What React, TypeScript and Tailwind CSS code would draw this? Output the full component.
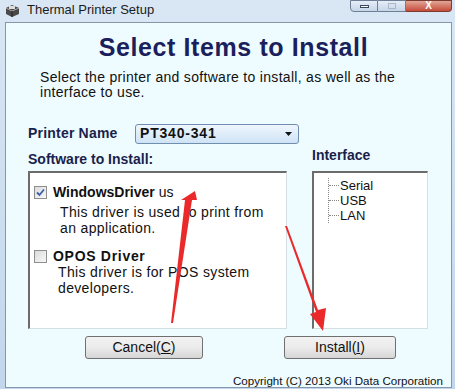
import React from 'react'

function Checkbox({ checked }: { checked?: boolean }) {
  return (
    <div className="w-[13px] h-[13px] border border-[#8f8f8f] bg-gradient-to-br from-[#dcdcdc] to-[#f7f7f7] flex items-center justify-center shrink-0">
      {checked && (
        <svg width="9" height="9" viewBox="0 0 9 9">
          <path d="M1 4.5 L3.5 7 L8 1.5" stroke="#3a5fa8" strokeWidth="1.8" fill="none" />
        </svg>
      )}
    </div>
  )
}

function WinButton({ label, underline }: { label: string; underline: string }) {
  return (
    <button className="h-[23px] rounded-[3px] border border-[#707070] bg-gradient-to-b from-[#f2f2f2] via-[#ebebeb] to-[#d6d6d6] text-[14px] text-[#111] flex items-center justify-center">
      {label}(<span className="underline">{underline}</span>)
    </button>
  )
}

export default function App() {
  return (
    <div className="w-[455px] h-[389px] relative overflow-hidden flex flex-col bg-gradient-to-b from-[#d9e7f5] to-[#c2d6ec] font-['Liberation_Sans',sans-serif]">
      {/* Title bar */}
      <div className="h-[22px] flex items-start pl-[4px] pt-[2px] gap-[6px]">
        <svg width="17" height="15" viewBox="0 0 17 15" className="mt-[1px]">
          <path d="M2 5 L8 2 L15 5 L15 11 L8 14 L2 11 Z" fill="#4a4a4a" />
          <path d="M2 5 L8 8 L15 5" stroke="#aaa" strokeWidth="1" fill="none" />
          <path d="M8 8 L8 14" stroke="#222" strokeWidth="1" />
          <rect x="5" y="3" width="6" height="3" fill="#ddd" />
        </svg>
        <span className="text-[13px] text-[#1b1b1b] leading-[16px]">Thermal Printer Setup</span>
      </div>
      <div className="absolute top-0 right-[3px] flex h-[12px]">
        <div className="w-[28px] h-full border border-[#6d7e95] rounded-bl-[4px] bg-gradient-to-b from-[#e6eef8] to-[#c6d5e8] flex items-center justify-center">
          <div className="w-[9px] h-[3px] border border-[#3b4a60] bg-white" />
        </div>
        <div className="w-[28px] h-full border-y border-r border-[#6d7e95] bg-gradient-to-b from-[#e6eef8] to-[#c6d5e8] flex items-center justify-center">
          <div className="w-[8px] h-[6px] border border-[#a9b6c7]" />
        </div>
        <div className="w-[46px] h-full border-y border-r border-[#7b3a30] rounded-br-[4px] bg-gradient-to-b from-[#e0a596] to-[#c4493a] flex items-center justify-center text-white text-[10px] font-bold leading-none">
          X
        </div>
      </div>

      {/* Client area */}
      <div className="flex-1 ml-[5px] mr-[3px] mb-[1px] border border-[#8696ab] bg-[#effcff] flex flex-col">
        <h1 className="mt-[9px] pl-[10px] text-center text-[25px] font-bold text-[#1b1f5c] leading-[30px] tracking-[0.6px]">
          Select Items to Install
        </h1>
        <p className="ml-[34px] mt-[8px] text-[14px] leading-[15px] text-[#111] w-[372px] tracking-[0.3px]">
          Select the printer and software to install, as well as the interface to use.
        </p>

        <div className="flex items-center mt-[23px] ml-[22px]">
          <span className="text-[14px] font-bold text-[#1b1f4c] w-[107px] tracking-[0.2px]">Printer Name</span>
          <div className="w-[164px] h-[20px] rounded-[3px] border border-[#6f8eb0] bg-gradient-to-b from-[#eef6fd] to-[#cfe3f5] flex items-center justify-between pl-[4px] pr-[6px]">
            <span className="text-[14px] font-bold text-[#111] tracking-[0.8px]">PT340-341</span>
            <svg width="7" height="4" viewBox="0 0 7 4">
              <path d="M0 0 L7 0 L3.5 4 Z" fill="#111" />
            </svg>
          </div>
        </div>

        <div className="flex ml-[22px] gap-[25px]">
          <div className="flex flex-col w-[259px]">
            <span className="text-[14px] font-bold text-[#1b1f4c] leading-[16px] mt-[7px]">Software to Install:</span>
            <div className="mt-[4px] h-[158px] bg-white border-l-[2px] border-t-[2px] border-[#6c6c6c] border-r border-b border-r-[#d5dde5] border-b-[#d5dde5] px-[4px] pt-[9px]">
              <div className="flex items-center gap-[6px]">
                <Checkbox checked />
                <span className="text-[14px] text-[#111]">
                  <span className="font-bold">WindowsDriver</span> us
                </span>
              </div>
              <p className="ml-[26px] mt-[1px] text-[14px] leading-[16px] text-[#111] tracking-[0.35px]">
                This driver is used to print from
                <br />
                an application.
              </p>
              <div className="flex items-center gap-[6px] mt-[10px]">
                <Checkbox />
                <span className="text-[14px] font-bold text-[#111] tracking-[0.7px]">OPOS Driver</span>
              </div>
              <p className="ml-[24px] mt-[-3px] text-[14px] leading-[16px] text-[#111] tracking-[0.35px]">
                This driver is for POS system
                <br />
                developers.
              </p>
            </div>
          </div>

          <div className="flex flex-col w-[116px]">
            <span className="text-[14px] font-bold text-[#1b1f4c] leading-[16px] mt-[3px]">Interface</span>
            <div className="mt-[8px] h-[158px] bg-white border-l-[2px] border-t-[2px] border-[#6c6c6c] border-r border-b border-r-[#d5dde5] border-b-[#d5dde5] pl-[14px] pt-[5px]">
              <div className="border-l border-dotted border-[#888] flex flex-col">
                {['Serial', 'USB', 'LAN'].map((item) => (
                  <div key={item} className="flex items-center h-[15px]">
                    <div className="w-[10px] border-t border-dotted border-[#888]" />
                    <span className="text-[13px] text-[#111] leading-[15px] ml-[1px]">{item}</span>
                  </div>
                ))}
              </div>
            </div>
          </div>
        </div>

        <div className="flex ml-[79px] mt-[7px] gap-[81px]">
          <div className="w-[118px] flex flex-col">
            <WinButton label="Cancel" underline="C" />
          </div>
          <div className="w-[112px] flex flex-col">
            <WinButton label="Install" underline="I" />
          </div>
        </div>

        <div className="mt-auto pr-[8px] text-right text-[11.6px] text-[#111] leading-[12px]">
          Copyright (C) 2013 Oki Data Corporation
        </div>
      </div>

      {/* Red annotation arrows */}
      <svg className="absolute inset-0 pointer-events-none" width="455" height="389" viewBox="0 0 455 389">
        <polygon points="195,191 181,200 185,200 171,323 173,323 192,200 197,200" fill="#ea2a2a" />
        <polygon points="285,226 287,226 318,310 326,308 323,331 310,314 316,312" fill="#ea2a2a" />
      </svg>
    </div>
  )
}
